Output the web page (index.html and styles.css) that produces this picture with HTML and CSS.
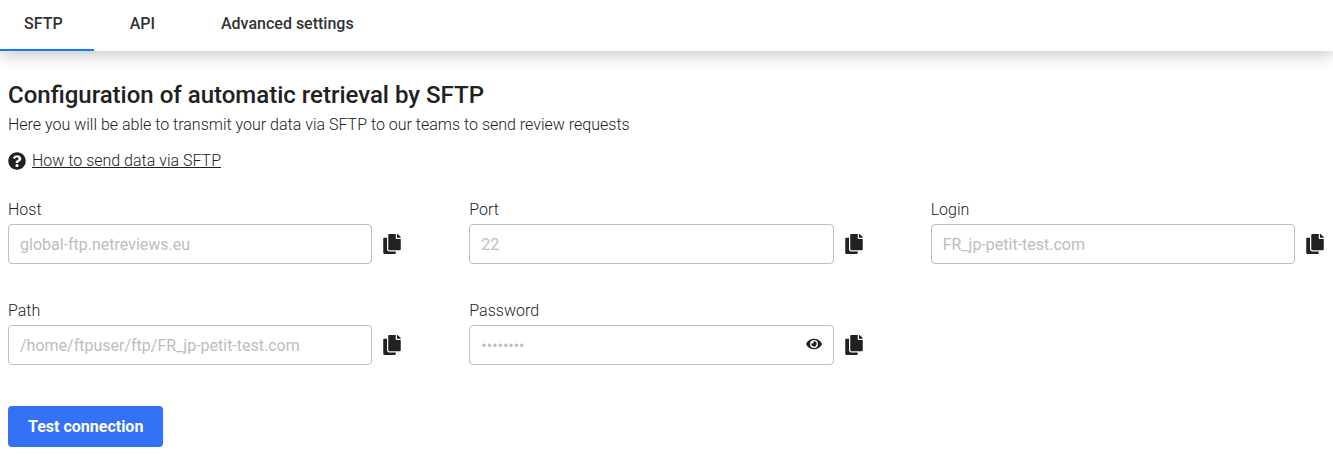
FILE: index.html
```html
<!DOCTYPE html>
<html lang="en">
<head>
  <meta charset="UTF-8">
  <title>SFTP configuration</title>
  <link rel="stylesheet" href="styles.css">
</head>
<body>
  <!-- shared icons -->
  <svg class="sprite" aria-hidden="true">
    <symbol id="icon-copy" viewBox="0 0 448 512">
      <path d="M320 448v40c0 13.255-10.745 24-24 24H24c-13.255 0-24-10.745-24-24V120c0-13.255 10.745-24 24-24h72v296c0 30.879 25.121 56 56 56h168zm0-344V0H152c-13.255 0-24 10.745-24 24v368c0 13.255 10.745 24 24 24h272c13.255 0 24-10.745 24-24V128H344c-13.2 0-24-10.8-24-24zm120.971-31.029L375.029 7.029A24 24 0 0 0 358.059 0H352v96h96v-6.059a24 24 0 0 0-7.029-16.97z"/>
    </symbol>
    <symbol id="icon-help" viewBox="0 0 512 512">
      <path d="M504 256c0 136.997-111.043 248-248 248S8 392.997 8 256C8 119.083 119.043 8 256 8s248 111.083 248 248zM262.655 90c-54.497 0-89.255 22.957-116.549 63.758-3.536 5.286-2.353 12.415 2.715 16.258l34.699 26.31c5.205 3.947 12.621 3.008 16.665-2.122 17.864-22.658 30.113-35.797 57.303-35.797 20.429 0 45.698 13.148 45.698 32.958 0 14.976-12.363 22.667-32.534 33.976C247.128 238.528 216 254.941 216 296v4c0 6.627 5.373 12 12 12h56c6.627 0 12-5.373 12-12v-1.333c0-28.462 83.186-29.647 83.186-106.667 0-58.002-60.165-102-116.531-102zM256 338c-25.365 0-46 20.635-46 46 0 25.364 20.635 46 46 46s46-20.636 46-46c0-25.365-20.635-46-46-46z"/>
    </symbol>
    <symbol id="icon-eye" viewBox="0 0 576 512">
      <path d="M572.52 241.4C518.29 135.59 410.93 64 288 64S57.68 135.64 3.48 241.41a32.35 32.35 0 0 0 0 29.19C57.71 376.41 165.07 448 288 448s230.32-71.64 284.52-177.41a32.35 32.35 0 0 0 0-29.19zM288 400a144 144 0 1 1 144-144 143.93 143.93 0 0 1-144 144zm0-240a95.31 95.31 0 0 0-25.31 3.79 47.85 47.85 0 0 1-66.9 66.9A95.78 95.78 0 1 0 288 160z"/>
    </symbol>
  </svg>

  <nav class="tabs">
    <a href="#sftp" class="tab active">SFTP</a>
    <a href="#api" class="tab">API</a>
    <a href="#advanced" class="tab">Advanced settings</a>
  </nav>

  <main class="content">
    <h1>Configuration of automatic retrieval by SFTP</h1>
    <p class="intro">Here you will be able to transmit your data via SFTP to our teams to send review requests</p>
    <p class="help">
      <svg class="icon-help" aria-hidden="true"><use href="#icon-help"/></svg>
      <a href="#help">How to send data via SFTP</a>
    </p>

    <form>
      <div class="fields">
        <div class="field">
          <label for="host">Host</label>
          <div class="control">
            <input type="text" id="host" placeholder="global-ftp.netreviews.eu">
            <button type="button" class="copy" aria-label="Copy host"><svg><use href="#icon-copy"/></svg></button>
          </div>
        </div>
        <div class="field">
          <label for="port">Port</label>
          <div class="control">
            <input type="text" id="port" placeholder="22">
            <button type="button" class="copy" aria-label="Copy port"><svg><use href="#icon-copy"/></svg></button>
          </div>
        </div>
        <div class="field">
          <label for="login">Login</label>
          <div class="control">
            <input type="text" id="login" placeholder="FR_jp-petit-test.com">
            <button type="button" class="copy" aria-label="Copy login"><svg><use href="#icon-copy"/></svg></button>
          </div>
        </div>
        <div class="field">
          <label for="path">Path</label>
          <div class="control">
            <input type="text" id="path" placeholder="/home/ftpuser/ftp/FR_jp-petit-test.com">
            <button type="button" class="copy" aria-label="Copy path"><svg><use href="#icon-copy"/></svg></button>
          </div>
        </div>
        <div class="field">
          <label for="password">Password</label>
          <div class="control">
            <div class="password">
              <input type="password" id="password" placeholder="••••••••">
              <button type="button" class="reveal" aria-label="Show password"><svg><use href="#icon-eye"/></svg></button>
            </div>
            <button type="button" class="copy" aria-label="Copy password"><svg><use href="#icon-copy"/></svg></button>
          </div>
        </div>
      </div>

      <button type="submit" class="submit">Test connection</button>
    </form>
  </main>
</body>
</html>
```
FILE: styles.css
```css
* {
  box-sizing: border-box;
}

body {
  margin: 0;
  font-family: Roboto, "Liberation Sans", sans-serif;
  font-size: 16px;
  line-height: 20px;
  font-weight: 300;
  color: #212121;
  background: #fff;
}

.sprite {
  display: none;
}

svg {
  display: block;
  fill: #212121;
}

.tabs {
  display: flex;
  gap: 6px;
  height: 51px;
  box-shadow: 0 4px 16px rgba(0, 0, 0, 0.22);
}

.tab {
  padding: 14px 30px 0;
  font-weight: 500;
  color: #333;
  text-decoration: none;
}

.tab.active {
  padding-left: 24px;
  padding-right: 31px;
  border-bottom: 2px solid #0d7bff;
}

.content {
  padding: 28px 9px 8px 8px;
}

h1 {
  margin: 0;
  font-size: 24px;
  line-height: 32px;
  font-weight: 500;
}

p {
  margin: 0;
}

.intro {
  margin-top: 4px;
}

.help {
  display: flex;
  align-items: center;
  gap: 6px;
  margin-top: 16px;
}

.help a {
  color: inherit;
}

.icon-help {
  width: 18px;
  height: 18px;
}

.fields {
  display: grid;
  grid-template-columns: repeat(3, 1fr);
  gap: 37px 68px;
  margin-top: 29px;
}

.field label {
  display: block;
  margin-bottom: 4px;
}

.control {
  display: flex;
  align-items: center;
  gap: 11px;
}

input {
  flex: 1;
  width: 100%;
  min-width: 0;
  height: 40px;
  padding: 0 11px;
  border: 1px solid #bdbdbd;
  border-radius: 4px;
  font: inherit;
  font-weight: 400;
  background: #fff;
}

input::placeholder {
  color: #bdbdbd;
}

.password {
  position: relative;
  display: flex;
  flex: 1;
}

button {
  padding: 0;
  border: 0;
  background: none;
  cursor: pointer;
}

.copy svg {
  width: 18px;
  height: 20px;
}

/* sits over the right end of the password box */
.reveal {
  position: absolute;
  top: 12px;
  right: 12px;
}

.reveal svg {
  width: 16px;
  height: 14px;
}

.submit {
  margin-top: 41px;
  height: 41px;
  padding: 0 20px;
  border-radius: 4px;
  font: inherit;
  font-weight: 700;
  color: #fff;
  background: #3371f6;
}
```
